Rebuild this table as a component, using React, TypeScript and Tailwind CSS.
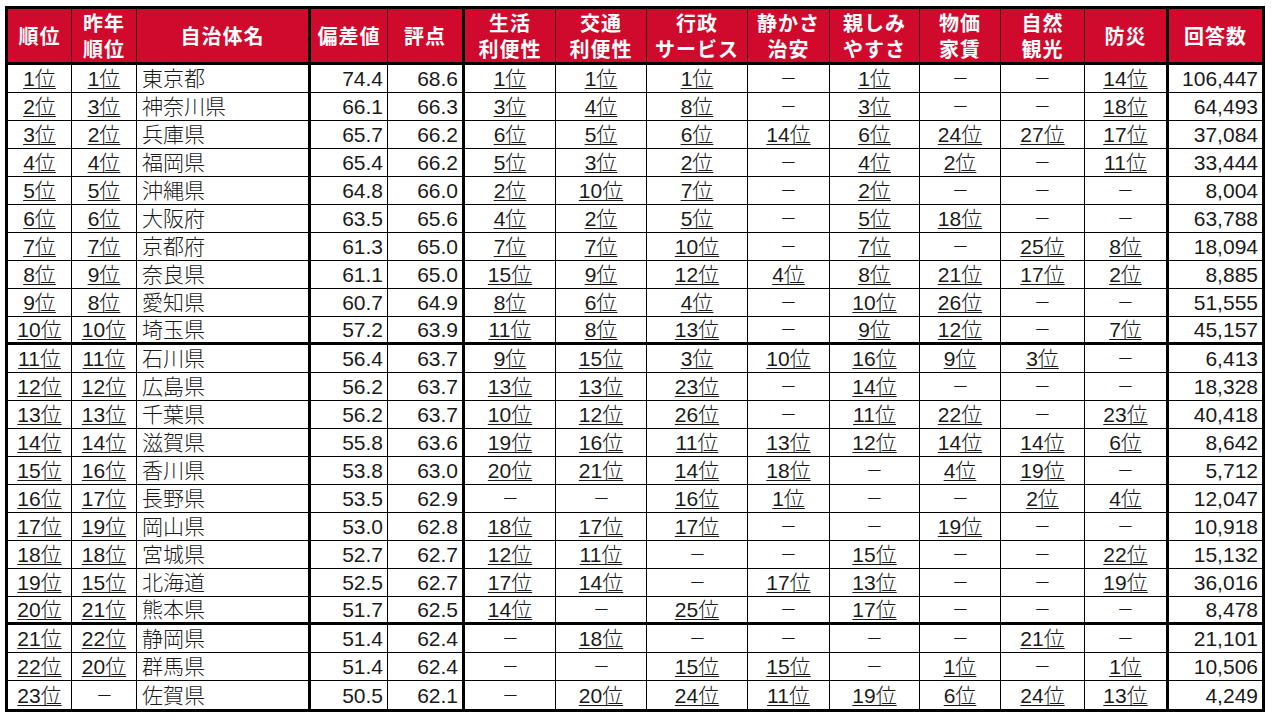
import React from "react";

const headers: string[][] = [
  ["順位"],
  ["昨年", "順位"],
  ["自治体名"],
  ["偏差値"],
  ["評点"],
  ["生活", "利便性"],
  ["交通", "利便性"],
  ["行政", "サービス"],
  ["静かさ", "治安"],
  ["親しみ", "やすさ"],
  ["物価", "家賃"],
  ["自然", "観光"],
  ["防災"],
  ["回答数"],
];

const D = "－";

const rows: string[][] = [
  ["1位", "1位", "東京都", "74.4", "68.6", "1位", "1位", "1位", D, "1位", D, D, "14位", "106,447"],
  ["2位", "3位", "神奈川県", "66.1", "66.3", "3位", "4位", "8位", D, "3位", D, D, "18位", "64,493"],
  ["3位", "2位", "兵庫県", "65.7", "66.2", "6位", "5位", "6位", "14位", "6位", "24位", "27位", "17位", "37,084"],
  ["4位", "4位", "福岡県", "65.4", "66.2", "5位", "3位", "2位", D, "4位", "2位", D, "11位", "33,444"],
  ["5位", "5位", "沖縄県", "64.8", "66.0", "2位", "10位", "7位", D, "2位", D, D, D, "8,004"],
  ["6位", "6位", "大阪府", "63.5", "65.6", "4位", "2位", "5位", D, "5位", "18位", D, D, "63,788"],
  ["7位", "7位", "京都府", "61.3", "65.0", "7位", "7位", "10位", D, "7位", D, "25位", "8位", "18,094"],
  ["8位", "9位", "奈良県", "61.1", "65.0", "15位", "9位", "12位", "4位", "8位", "21位", "17位", "2位", "8,885"],
  ["9位", "8位", "愛知県", "60.7", "64.9", "8位", "6位", "4位", D, "10位", "26位", D, D, "51,555"],
  ["10位", "10位", "埼玉県", "57.2", "63.9", "11位", "8位", "13位", D, "9位", "12位", D, "7位", "45,157"],
  ["11位", "11位", "石川県", "56.4", "63.7", "9位", "15位", "3位", "10位", "16位", "9位", "3位", D, "6,413"],
  ["12位", "12位", "広島県", "56.2", "63.7", "13位", "13位", "23位", D, "14位", D, D, D, "18,328"],
  ["13位", "13位", "千葉県", "56.2", "63.7", "10位", "12位", "26位", D, "11位", "22位", D, "23位", "40,418"],
  ["14位", "14位", "滋賀県", "55.8", "63.6", "19位", "16位", "11位", "13位", "12位", "14位", "14位", "6位", "8,642"],
  ["15位", "16位", "香川県", "53.8", "63.0", "20位", "21位", "14位", "18位", D, "4位", "19位", D, "5,712"],
  ["16位", "17位", "長野県", "53.5", "62.9", D, D, "16位", "1位", D, D, "2位", "4位", "12,047"],
  ["17位", "19位", "岡山県", "53.0", "62.8", "18位", "17位", "17位", D, D, "19位", D, D, "10,918"],
  ["18位", "18位", "宮城県", "52.7", "62.7", "12位", "11位", D, D, "15位", D, D, "22位", "15,132"],
  ["19位", "15位", "北海道", "52.5", "62.7", "17位", "14位", D, "17位", "13位", D, D, "19位", "36,016"],
  ["20位", "21位", "熊本県", "51.7", "62.5", "14位", D, "25位", D, "17位", D, D, D, "8,478"],
  ["21位", "22位", "静岡県", "51.4", "62.4", D, "18位", D, D, D, D, "21位", D, "21,101"],
  ["22位", "20位", "群馬県", "51.4", "62.4", D, D, "15位", "15位", D, "1位", D, "1位", "10,506"],
  ["23位", D, "佐賀県", "50.5", "62.1", D, "20位", "24位", "11位", "19位", "6位", "24位", "13位", "4,249"],
];

function rightBorder(i: number): string {
  if (i === 13) return "border-r-0";
  if (i === 2 || i === 4 || i === 12) return "border-r-[3px]";
  return "border-r";
}

function align(i: number): string {
  if (i === 2) return "justify-start pl-[5px]";
  if (i === 3 || i === 4 || i === 13) return "justify-end pr-[4px]";
  return "justify-center";
}

function Cell({ v }: { v: string }) {
  if (v === D) {
    return <span className="inline-block scale-x-[0.8] whitespace-nowrap leading-[22px]">{v}</span>;
  }
  if (v.endsWith("位")) {
    return (
      <span className="inline-block whitespace-nowrap leading-[22px] underline decoration-1 underline-offset-[2px]">
        {v}
      </span>
    );
  }
  return <span className="inline-block whitespace-nowrap leading-[22px]">{v}</span>;
}

export default function App() {
  return (
    <div className="min-h-[721px] w-[1272px] bg-white pl-[5px] pt-[6px]">
      <div className="w-[1260px] border-[3px] border-black font-['Liberation_Sans','Noto_Sans_CJK_JP',sans-serif]">
        <div className="grid grid-cols-[64px_65px_174px_77px_77px_91px_91px_101px_82px_90px_81px_84px_84px_93px]">
          {headers.map((h, i) => (
            <div
              key={"h" + i}
              className={
                "flex h-[56px] flex-col items-center justify-center border-b-[3px] border-b-black bg-[#cf0a2c] pt-[2px] text-[20px] font-bold leading-[26px] tracking-[1px] text-white " +
                rightBorder(i) +
                (i === 2 || i === 4 || i === 12 ? " border-r-black" : " border-r-[#4a0010]")
              }
            >
              {h.map((line, k) => (
                <span key={k} className="block whitespace-nowrap leading-[26px]">
                  {line}
                </span>
              ))}
            </div>
          ))}
          {rows.map((r, ri) =>
            r.map((v, ci) => (
              <div
                key={ri + "-" + ci}
                className={
                  "flex h-[28px] items-center border-black pt-[1px] text-[21px] font-light leading-none text-[#1a1a1a] " +
                  rightBorder(ci) +
                  " " +
                  align(ci) +
                  " " +
                  (ri === rows.length - 1 ? "border-b-0" : ri === 9 || ri === 19 ? "border-b-[3px]" : "border-b")
                }
              >
                <Cell v={v} />
              </div>
            ))
          )}
        </div>
      </div>
    </div>
  );
}
